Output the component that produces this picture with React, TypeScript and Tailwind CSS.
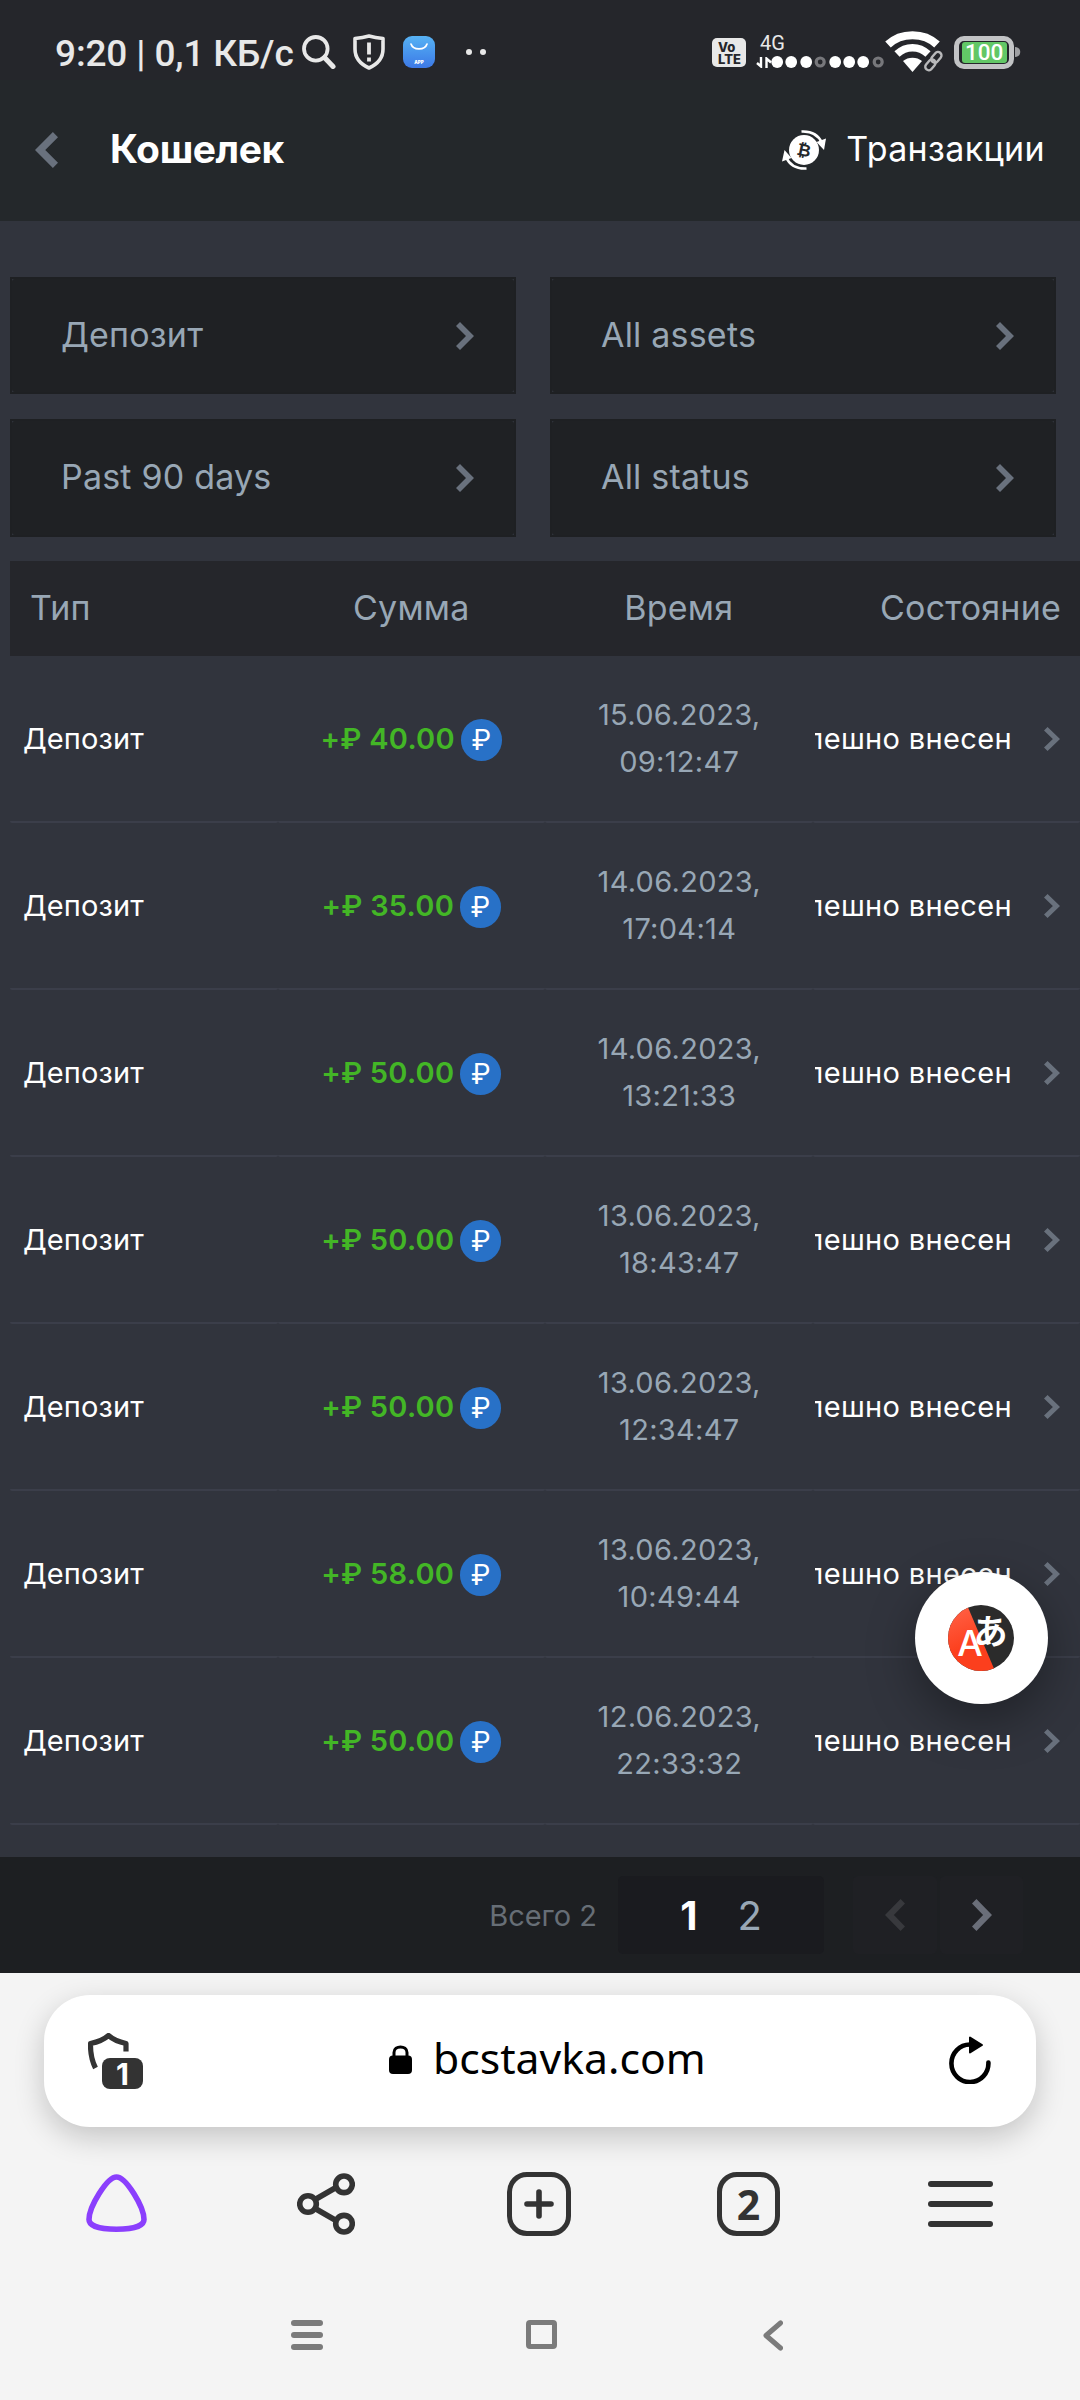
import { ReactNode } from "react";

interface Transaction {
    amount: string;
    date: string;
    time: string;
}

const transactions: Transaction[] = [
    { amount: "40.00", date: "15.06.2023", time: "09:12:47" },
    { amount: "35.00", date: "14.06.2023", time: "17:04:14" },
    { amount: "50.00", date: "14.06.2023", time: "13:21:33" },
    { amount: "50.00", date: "13.06.2023", time: "18:43:47" },
    { amount: "50.00", date: "13.06.2023", time: "12:34:47" },
    { amount: "58.00", date: "13.06.2023", time: "10:49:44" },
    { amount: "50.00", date: "12.06.2023", time: "22:33:32" },
];

const filters = ["Депозит", "All assets", "Past 90 days", "All status"];

// true = filled dot, false = hollow dot
const signalDots = [true, true, true, false, true, true, true, false];

interface ChevronProps {
    className: string;
    left?: boolean;
}

const Chevron = ({ className, left }: ChevronProps) => (
    <svg viewBox="0 0 18 28" preserveAspectRatio="none" fill="currentColor" className={className}>
        {left ? (
            <path d="M18 4 14 0 0 14 14 28 18 24 8 14Z" />
        ) : (
            <path d="M0 4 4 0 18 14 4 28 0 24 10 14Z" />
        )}
    </svg>
);

const StatusBar = () => (
    <div className="flex h-20 items-center bg-[#25262b] pl-[55px] text-[#e8e8e8]">
        <span className="mt-[26px] w-[247px] whitespace-nowrap font-[Roboto,sans-serif] text-[37px] font-medium leading-[43px] tracking-[-0.15px]">
            9:20 | 0,1 КБ/с
        </span>
        <svg viewBox="0 0 34 34" className="mt-6 h-[34px] w-[34px]" fill="none" stroke="currentColor">
            <circle cx="13.8" cy="13.8" r="11.8" strokeWidth="3.8" />
            <path d="M22.5 22.5 31 31.5" strokeWidth="5" strokeLinecap="round" />
        </svg>
        <svg viewBox="0 0 32 36" className="mt-6 ml-[17px] h-9 w-8" fill="none" stroke="currentColor">
            <path
                d="M2 4.5C8 4 12 3.2 16 2c4 1.2 8 2 14 2.5V15c0 9-5 15-14 19C7 30 2 24 2 15Z"
                strokeWidth="3.6"
                strokeLinejoin="round"
            />
            <path d="M16 8.5V20.5M16 23.5V27.5" strokeWidth="3.8" />
        </svg>
        <div className="mt-6 ml-[18px] flex h-8 w-8 flex-col items-center rounded-[9px] bg-linear-to-b from-[#57b2f4] to-[#3d78e6]">
            <svg viewBox="0 0 18 8" className="mt-[7px] h-2 w-[18px]" fill="none" stroke="#fff" strokeWidth="1.7">
                <path d="M1 1c2 6.5 14 6.5 16 0" strokeLinecap="round" />
            </svg>
            <span className="mt-[9px] font-[Inter,sans-serif] text-[4.5px] leading-[5px] font-black text-white">APP</span>
        </div>
        <div className="mt-6 ml-[31px] flex gap-2">
            <span className="h-1.5 w-1.5 rounded-full bg-current" />
            <span className="h-1.5 w-1.5 rounded-full bg-current" />
        </div>

        <div className="mt-[25px] ml-[226px] flex h-[29px] w-[34px] flex-col justify-center rounded-[5px] bg-[#e8e8e8] pl-1.5 font-[Inter,sans-serif] text-[13px] leading-[12px] font-extrabold text-[#25262b]">
            <span>Vo</span>
            <span>LTE</span>
        </div>
        <div className="mt-[22px] ml-2.5 flex flex-col">
            <span className="-mt-0.5 ml-1 font-[Roboto,sans-serif] text-[20px] leading-[20px]">4G</span>
            <div className="mt-1 flex h-[11px] items-center">
                <svg viewBox="0 0 16 11" className="-mr-0.5 h-[11px] w-4" fill="none" stroke="#fff" strokeWidth="2.4">
                    <path d="M1 6 5 9.5V0M10.5 11V1.5L15 5.5" />
                </svg>
                {signalDots.map((filled, i) => (
                    <svg key={i} viewBox="0 0 14.4 12" className="h-3 w-[14.4px]">
                        {filled ? (
                            <circle cx="7.2" cy="6" r="5.9" fill="#fff" />
                        ) : (
                            <circle cx="7.2" cy="6" r="4" fill="none" stroke="#77777b" strokeWidth="3.2" />
                        )}
                    </svg>
                ))}
            </div>
        </div>
        <svg viewBox="0 0 60 42" className="mt-6 h-[42px] w-[60px]" fill="none">
            <path d="M3 13.5C16 1 39 1 52 13.5" stroke="#fff" strokeWidth="8" />
            <path d="M12 23C21 14.5 34 14.5 43 23" stroke="#fff" strokeWidth="7.5" />
            <path d="M18 30C23 25.5 32 25.5 37 30L27.5 41Z" fill="#fff" />
            <g stroke="#25262b" strokeWidth="6">
                <rect x="44" y="22.5" width="14" height="7.5" rx="3.7" transform="rotate(-50 51 26)" />
                <rect x="38" y="30" width="14" height="7.5" rx="3.7" transform="rotate(-50 45 33.5)" />
            </g>
            <g stroke="#b8b8ba" strokeWidth="2.4">
                <rect x="45" y="23" width="12" height="7" rx="3.5" transform="rotate(-50 51 26)" />
                <rect x="39" y="30.5" width="12" height="7" rx="3.5" transform="rotate(-50 45 33.5)" />
            </g>
        </svg>
        <div className="mt-6 ml-[9px] flex h-[33px] w-[60px] items-center justify-center rounded-[10px] border-[5px] border-[#c2c3c5] p-0.5">
            <span className="flex h-[21px] w-[45px] items-center justify-center rounded-[3px] bg-[#62c766] font-[Roboto,sans-serif] text-[22.5px] leading-none font-medium text-white">
                100
            </span>
        </div>
        <svg viewBox="0 0 6 12" className="mt-6 ml-px h-3 w-1.5">
            <path d="M0 1C7 1 7 11 0 11Z" fill="#9fa0a3" />
        </svg>
    </div>
);

const PageHeader = () => (
    <header className="flex h-[141px] items-center bg-[#24282b] pb-px text-white">
        <Chevron left className="ml-[35px] h-9 w-[23px] text-[#69717d]" />
        <h1 className="ml-[52px] pb-[3px] text-[39px] leading-none font-bold tracking-[-0.4px]">Кошелек</h1>
        <div className="mr-[35px] ml-auto flex items-center gap-5">
            <svg viewBox="0 0 44 40" className="h-10 w-11" fill="none">
                <circle cx="22" cy="20" r="15" fill="#fff" />
                <path d="M19.5 1.5C30 1 37 6 40 13" stroke="#fff" strokeWidth="2.6" />
                <path d="M34.5 12 44 8.5 42 20Z" fill="#fff" />
                <path d="M24.5 38.5C14 39 7 34 4 27" stroke="#fff" strokeWidth="2.6" />
                <path d="M9.5 28 0 31.5 2.5 20Z" fill="#fff" />
                <text
                    x="22"
                    y="26"
                    textAnchor="middle"
                    fontSize="17"
                    fontWeight="700"
                    fill="#24282b"
                    fontFamily="DejaVu Sans, sans-serif"
                    transform="rotate(12 22 20)"
                >
                    ₿
                </text>
            </svg>
            <span className="pb-0.5 text-[34px] leading-none tracking-[0.35px]">Транзакции</span>
        </div>
    </header>
);

const FilterBox = ({ label }: { label: string }) => (
    <div className="border-2 border-[#1e2023] bg-[#31343d]">
        <div className="flex h-full items-center justify-between rounded-[3px] bg-[#1f2124] pr-10 pl-[49px]">
            <span className="pb-0.5 text-[34px] leading-none tracking-[0.2px] text-[#98a7b5]">{label}</span>
            <Chevron className="h-7 w-[18px] text-[#69717d]" />
        </div>
    </div>
);

const Cell = ({ className, children }: { className: string; children: ReactNode }) => (
    <div className={`flex h-[167px] items-center rounded-[2px] border-b-2 border-[#3b3e4a] ${className}`}>{children}</div>
);

const TransactionRow = ({ amount, date, time }: Transaction) => (
    <div className="grid grid-cols-4 text-[29px] tracking-[0.3px]">
        <Cell className="pl-[13px] tracking-[0.1px] text-white">Депозит</Cell>
        <Cell className="justify-center gap-[6px] font-semibold tracking-[0.25px] text-[#43b626]">
            <span>+₽ {amount}</span>
            <span className="mt-0.5 flex h-[42px] w-[41px] items-center justify-center rounded-full bg-[#2871c7] text-[28px] font-normal text-white">
                ₽
            </span>
        </Cell>
        <Cell className="justify-center pb-0.5 pl-px text-center leading-[47px] text-[#98a7b5]">
            {date},
            <br />
            {time}
        </Cell>
        <Cell className="justify-end pr-5 tracking-[0.35px] text-white">
            <div className="flex w-[197px] justify-end overflow-hidden whitespace-nowrap">Успешно внесен</div>
            <Chevron className="ml-8 h-6 w-4 text-[#69717d]" />
        </Cell>
    </div>
);

const TranslateButton = () => (
    <div className="absolute top-[1572px] left-[915px] flex h-[132px] w-[133px] items-center justify-center rounded-full bg-white pr-px shadow-[0_16px_48px_rgba(0,0,0,0.35)]">
        <svg viewBox="0 0 66 66" className="h-[66px] w-[66px]">
            <defs>
                <clipPath id="disc">
                    <circle cx="33" cy="33" r="33" />
                </clipPath>
                <linearGradient id="red" x1="0" y1="0" x2="0.3" y2="1">
                    <stop offset="0.2" stopColor="#ff5a3d" />
                    <stop offset="0.7" stopColor="#fc3f1d" />
                </linearGradient>
            </defs>
            <g clipPath="url(#disc)">
                <rect width="66" height="66" fill="#2b2b2b" />
                <path d="M0 0H19L47 66H0Z" fill="url(#red)" />
            </g>
            <text x="22" y="50.5" textAnchor="middle" fontSize="36" fontWeight="500" fill="#fff" fontFamily="Inter, sans-serif">
                A
            </text>
            <text x="42.5" y="39" textAnchor="middle" fontSize="34" fontWeight="700" fill="#fff" fontFamily="Noto Sans CJK JP, sans-serif">
                あ
            </text>
        </svg>
    </div>
);

const Pagination = () => (
    <div className="flex h-[116px] items-center bg-[#1d1f22] pr-[57px]">
        <span className="ml-auto pt-0.5 text-[29px] text-[#676e76]">Всего 2</span>
        <div className="ml-[21px] flex h-[78px] w-[206px] items-center justify-center gap-10 rounded-[5px] bg-[#1a1b1f] pt-0.5 text-[40px]">
            <span className="font-bold text-white">1</span>
            <span className="text-[#98a7b5]">2</span>
        </div>
        <div className="ml-[29px] flex h-[78px] w-[84px] items-center justify-center rounded-[5px] bg-[#1f2024] text-[#38393d]">
            <Chevron left className="h-8 w-5" />
        </div>
        <div className="ml-[3px] flex h-[78px] w-[83px] items-center justify-center rounded-[5px] bg-[#1f2024] text-[#6a6e79]">
            <Chevron className="h-8 w-5" />
        </div>
    </div>
);

const AddressBar = () => (
    <div className="mx-11 mt-[21px] flex h-[132px] items-center rounded-[46px] bg-white pl-11 shadow-[0_10px_30px_rgba(0,0,0,0.2)]">
        <div className="relative h-14 w-[55px]">
            <svg viewBox="0 0 55 56" className="h-14 w-[55px]" fill="none">
                <path
                    d="M38 18.5V10.5C31 9 25 6.5 20.5 2.5 16 6.5 10 9 2.5 10.5 2.3 20 3.5 27 7.5 35"
                    stroke="#333"
                    strokeWidth="5.2"
                    strokeLinejoin="round"
                />
            </svg>
            <span className="absolute right-0 bottom-0 flex h-[31px] w-[41px] items-center justify-center rounded-[8px] bg-[#333] text-[30px] leading-none font-bold text-white">
                1
            </span>
        </div>
        <svg viewBox="0 0 23 29" className="mb-1 ml-[246px] h-[29px] w-[23px]">
            <path d="M5 13V7.5C5 0 18 0 18 7.5V13" fill="none" stroke="#000" strokeWidth="3" />
            <rect y="10.5" width="23" height="18.5" rx="4" />
        </svg>
        <span className="mb-1.5 ml-[21px] font-['Noto_Sans',sans-serif] text-[42.7px] leading-none text-black">
            bcstavka.com
        </span>
        <svg viewBox="0 0 42 48" className="mr-[45px] mb-0.5 ml-auto h-12 w-[42px]" fill="none">
            <path d="M39.4 26.5A18.5 18.8 0 1 1 21 8.5" stroke="#000" strokeWidth="4.6" strokeLinecap="round" />
            <path d="M21 1.5V16.5L33 9Z" fill="#000" stroke="#000" strokeWidth="2" strokeLinejoin="round" />
        </svg>
    </div>
);

const Toolbar = () => (
    <div className="mt-[45px] flex h-16 items-center pl-[86px]">
        <svg viewBox="0 0 61 58" className="mb-0.5 h-[58px] w-[61px]" fill="none">
            <path
                d="M30.5 3C40 3 58 33 58 45.5 58 51 50 55.2 30.5 55.2S3 51 3 45.5C3 33 21 3 30.5 3Z"
                stroke="#8b3ffd"
                strokeWidth="5.6"
            />
        </svg>
        <svg viewBox="0 0 58 62" className="ml-[150px] h-[62px] w-[58px]" fill="none" stroke="#333" strokeWidth="5.6">
            <path d="M19 26 39 14.5M19 36 39 47.5" />
            <circle cx="11" cy="31" r="8.3" />
            <circle cx="47" cy="11.3" r="8.3" />
            <circle cx="47" cy="50.7" r="8.3" />
        </svg>
        <div className="ml-[152px] flex h-16 w-16 items-center justify-center rounded-[20px] border-[5.6px] border-[#333]">
            <svg viewBox="0 0 30 30" className="h-[30px] w-[30px]" stroke="#333" strokeWidth="5.6" strokeLinecap="round">
                <path d="M15 3V27M3 15H27" />
            </svg>
        </div>
        <div className="ml-[146px] flex h-16 w-[63px] items-center justify-center rounded-[20px] border-[5.6px] border-[#333] font-['Noto_Sans',sans-serif] text-[41px] leading-none font-bold text-[#333]">
            2
        </div>
        <div className="ml-[148px] flex w-[65px] flex-col gap-[14px]">
            <span className="h-1.5 rounded-full bg-[#333]" />
            <span className="h-1.5 rounded-full bg-[#333]" />
            <span className="h-1.5 rounded-full bg-[#333]" />
        </div>
    </div>
);

const SystemNav = () => (
    <div className="mt-[83px] flex h-8 items-center pl-[291px] text-[#7b7b7b]">
        <div className="flex w-8 flex-col gap-1.5">
            <span className="h-1.5 rounded-full bg-current" />
            <span className="h-1.5 rounded-full bg-current" />
            <span className="h-1.5 rounded-full bg-current" />
        </div>
        <div className="mb-0.5 ml-[203px] h-[29px] w-[31px] rounded-[4px] border-[5.6px] border-current" />
        <svg
            viewBox="0 0 20 31"
            className="ml-[206px] h-[31px] w-5"
            fill="none"
            stroke="currentColor"
            strokeWidth="5"
            strokeLinecap="round"
            strokeLinejoin="round"
        >
            <path d="M17.5 3 3 15.5 17.5 28" />
        </svg>
    </div>
);

export default function App() {
    return (
        <div className="relative h-[2400px] w-[1080px] overflow-hidden bg-[#31343d] font-[Inter,sans-serif]">
            <StatusBar />
            <PageHeader />
            <main className="h-[1636px] pt-14 pl-2.5">
                <div className="grid grid-cols-2 grid-rows-[117px_118px] gap-x-[34px] gap-y-[25px] pr-6">
                    {filters.map((label) => (
                        <FilterBox key={label} label={label} />
                    ))}
                </div>
                <div className="mt-6 grid h-[95px] grid-cols-4 items-center bg-[#25262b] pb-0.5 text-[34px] leading-none tracking-[0.2px] text-[#98a7b5]">
                    <span className="pl-5">Тип</span>
                    <span className="text-center">Сумма</span>
                    <span className="text-center">Время</span>
                    <span className="pr-[19px] text-right">Состояние</span>
                </div>
                {transactions.map((tx) => (
                    <TransactionRow key={`${tx.date}-${tx.time}`} {...tx} />
                ))}
            </main>
            <Pagination />
            <div className="h-[427px] bg-[#f4f4f4] pt-px">
                <AddressBar />
                <Toolbar />
                <SystemNav />
            </div>
            <TranslateButton />
        </div>
    );
}
